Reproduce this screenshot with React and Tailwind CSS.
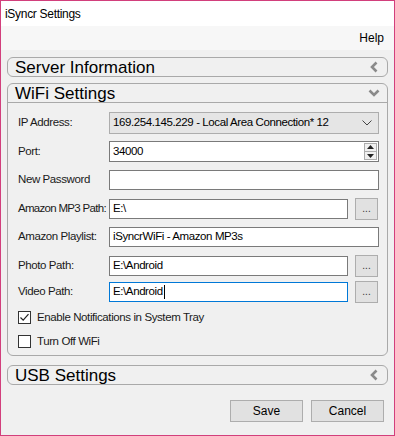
import React from "react";

const font = { fontFamily: '"Liberation Sans", Arial, sans-serif' };

const ChevronLeft = () => (
  <svg width="10" height="12" viewBox="0 0 10 12" className="shrink-0">
    <path d="M7.5 1.5 L3 6 L7.5 10.5" fill="none" stroke="#8a8a8a" strokeWidth="2.6" />
  </svg>
);

const ChevronDown = () => (
  <svg width="12" height="9" viewBox="0 0 12 9" className="shrink-0">
    <path d="M1.5 1.5 L6 6 L10.5 1.5" fill="none" stroke="#8a8a8a" strokeWidth="2.6" />
  </svg>
);

/* collapsed section header */
const SectionBar = ({ title, className = "" }) => (
  <div
    className={`h-[20px] mx-[6px] flex items-center justify-between pl-[7px] pr-[8px] border border-[#a9a9a9] rounded-[6px] bg-[#f0f0f0] ${className}`}
  >
    <span className="text-[17px] leading-none text-black">{title}</span>
    <ChevronLeft />
  </div>
);

const TextBox = ({ value = "", focused = false }) => (
  <div
    className={`flex-1 h-[20px] bg-white border flex items-center pl-[3px] text-black ${
      focused ? "border-[#0078d7]" : "border-[#7a7a7a]"
    }`}
  >
    <span>{value}</span>
    {focused && <span className="w-px h-[14px] bg-black ml-px" />}
  </div>
);

const BrowseBtn = () => (
  <div className="w-[23px] h-[22px] ml-[7px] mr-px bg-[#e1e1e1] border border-[#adadad] flex items-end justify-center pb-[5px] text-[10px] tracking-normal leading-none text-[#333]">
    ...
  </div>
);

const Row = ({ label, h, tight = false, children }) => (
  <div className={`flex items-center ${h}`}>
    <span
      className={`w-[91px] shrink-0 text-[#1a1a1a] whitespace-nowrap ${
        tight ? "tracking-[-0.7px]" : ""
      }`}
    >
      {label}
    </span>
    {children}
  </div>
);

const CheckBox = ({ checked, label, h }) => (
  <div className={`flex items-center ${h}`}>
    <div className="w-[13px] h-[13px] border border-[#333] bg-white flex items-center justify-center">
      {checked && (
        <svg width="11" height="11" viewBox="0 0 11 11">
          <path d="M1.5 5.5 L4.2 8.2 L9.5 2.2" fill="none" stroke="#222" strokeWidth="1.2" />
        </svg>
      )}
    </div>
    <span className="ml-[6px] text-[#1a1a1a]">{label}</span>
  </div>
);

export default function App() {
  return (
    <div
      style={font}
      className="w-[395px] h-[436px] border border-[#d23f7c] bg-[#f0f0f0] flex flex-col overflow-hidden"
    >
      {/* TITLE */}
      <div className="h-[25px] bg-white flex items-center pl-[4px] text-[12px] tracking-[-0.3px] text-black">
        iSyncr Settings
      </div>

      {/* MENU */}
      <div className="h-[24px] bg-[#f7f7f7] flex items-center justify-end pr-[10px] text-[12px] text-black">
        Help
      </div>

      <div className="flex flex-col text-[11.5px] tracking-[-0.4px]">
        <SectionBar title="Server Information" className="mt-[7px] tracking-normal" />

        {/* WIFI */}
        <div className="mt-[6px] mx-[6px] border border-[#a9a9a9] rounded-[6px] flex flex-col">
          <div className="h-[19px] flex items-center justify-between pl-[7px] pr-[7px] border-b border-[#a9a9a9]">
            <span className="text-[17px] tracking-normal leading-none text-black">WiFi Settings</span>
            <ChevronDown />
          </div>

          <div className="flex flex-col pl-[10px] pr-[8px] pt-[9px]">
            <Row label="IP Address:" h="h-[22px]">
              <div className="flex-1 h-[22px] bg-[#e5e5e5] border border-[#adadad] flex items-center justify-between pl-[3px] pr-[6px] text-black">
                <span>169.254.145.229 - Local Area Connection* 12</span>
                <svg width="10" height="6" viewBox="0 0 10 6">
                  <path d="M0.5 0.5 L5 5 L9.5 0.5" fill="none" stroke="#444" strokeWidth="1" />
                </svg>
              </div>
            </Row>

            <Row label="Port:" h="h-[21px] mt-[7px]">
              <div className="flex-1 h-[21px] bg-white border border-[#7a7a7a] flex items-center justify-between pl-[3px] pr-[1px] text-black">
                <span>34000</span>
                <div className="w-[13px] h-[17px] border border-[#adadad] bg-[#f0f0f0] flex flex-col items-center justify-around">
                  <svg width="7" height="4" viewBox="0 0 7 4">
                    <path d="M0 4 L3.5 0 L7 4 Z" fill="#222" />
                  </svg>
                  <div className="w-full h-px bg-[#adadad]" />
                  <svg width="7" height="4" viewBox="0 0 7 4">
                    <path d="M0 0 L3.5 4 L7 0 Z" fill="#222" />
                  </svg>
                </div>
              </div>
            </Row>

            <Row label="New Password" h="h-[20px] mt-[8px]">
              <TextBox />
            </Row>

            <Row label="Amazon MP3 Path:" h="h-[22px] mt-[8px]" tight>
              <TextBox value="E:\" />
              <BrowseBtn />
            </Row>

            <Row label="Amazon Playlist:" h="h-[20px] mt-[7px]">
              <TextBox value="iSyncrWiFi - Amazon MP3s" />
            </Row>

            <Row label="Photo Path:" h="h-[22px] mt-[8px]">
              <TextBox value="E:\Android" />
              <BrowseBtn />
            </Row>

            <Row label="Video Path:" h="h-[22px] mt-[4px]">
              <TextBox value="E:\Android" focused />
              <BrowseBtn />
            </Row>

            <CheckBox checked label="Enable Notifications in System Tray" h="h-[13px] mt-[8px]" />
            <CheckBox label="Turn Off WiFi" h="h-[13px] mt-[11px] mb-[7px]" />
          </div>
        </div>

        <SectionBar title="USB Settings" className="mt-[9px] tracking-normal" />

        {/* BUTTONS */}
        <div className="flex justify-end gap-[8px] mt-[15px] pr-[10px] tracking-normal">
          <button className="w-[73px] h-[22px] bg-[#e1e1e1] border border-[#adadad] text-[12px] text-black">
            Save
          </button>
          <button className="w-[73px] h-[22px] bg-[#e1e1e1] border border-[#adadad] text-[12px] text-black">
            Cancel
          </button>
        </div>
      </div>
    </div>
  );
}
